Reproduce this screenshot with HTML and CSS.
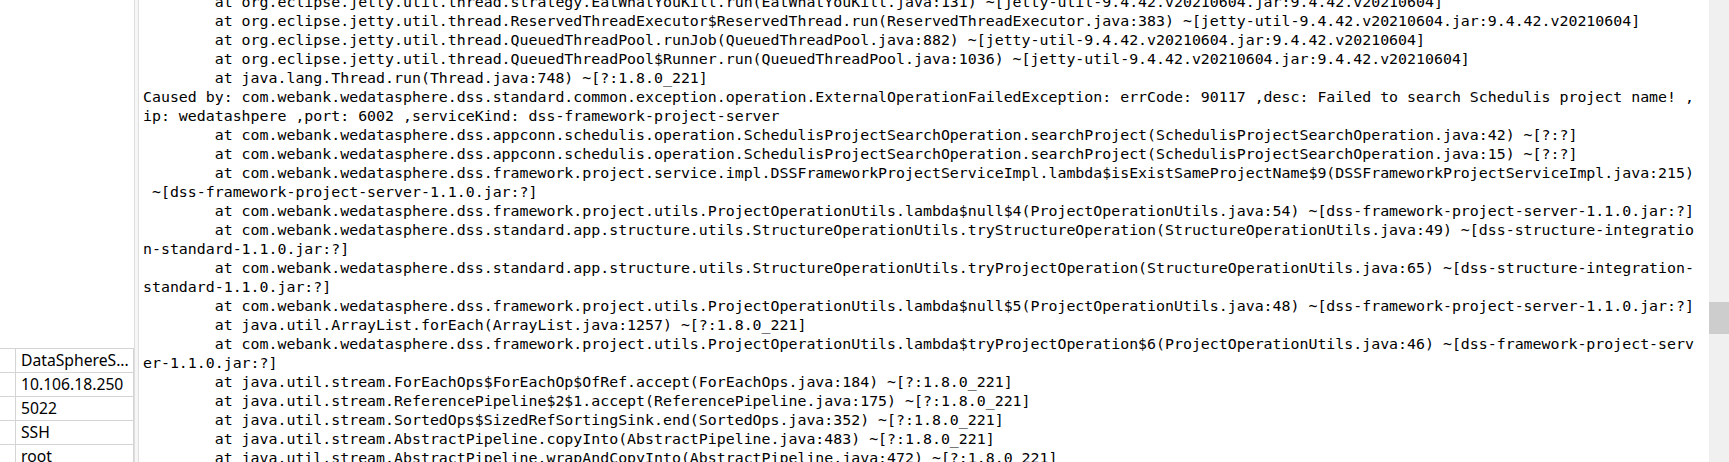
FILE: index.html
```html
<!DOCTYPE html>
<html>
<head>
<meta charset="utf-8">
<link rel="stylesheet" href="styles.css">
</head>
<body>
<div class="app">
  <div class="side">
    <div class="tree"></div>
    <table class="props">
      <tr><td class="gut"></td><td>DataSphereS...</td></tr>
      <tr><td class="gut"></td><td>10.106.18.250</td></tr>
      <tr><td class="gut"></td><td>5022</td></tr>
      <tr><td class="gut"></td><td>SSH</td></tr>
      <tr><td class="gut"></td><td>root</td></tr>
    </table>
  </div>
  <div class="splitter"></div>
  <div class="log">
<pre class="log-text">        at org.eclipse.jetty.util.thread.strategy.EatWhatYouKill.run(EatWhatYouKill.java:131) ~[jetty-util-9.4.42.v20210604.jar:9.4.42.v20210604]
        at org.eclipse.jetty.util.thread.ReservedThreadExecutor$ReservedThread.run(ReservedThreadExecutor.java:383) ~[jetty-util-9.4.42.v20210604.jar:9.4.42.v20210604]
        at org.eclipse.jetty.util.thread.QueuedThreadPool.runJob(QueuedThreadPool.java:882) ~[jetty-util-9.4.42.v20210604.jar:9.4.42.v20210604]
        at org.eclipse.jetty.util.thread.QueuedThreadPool$Runner.run(QueuedThreadPool.java:1036) ~[jetty-util-9.4.42.v20210604.jar:9.4.42.v20210604]
        at java.lang.Thread.run(Thread.java:748) ~[?:1.8.0_221]
Caused by: com.webank.wedatasphere.dss.standard.common.exception.operation.ExternalOperationFailedException: errCode: 90117 ,desc: Failed to search Schedulis project name! ,
ip: wedatashpere ,port: 6002 ,serviceKind: dss-framework-project-server
        at com.webank.wedatasphere.dss.appconn.schedulis.operation.SchedulisProjectSearchOperation.searchProject(SchedulisProjectSearchOperation.java:42) ~[?:?]
        at com.webank.wedatasphere.dss.appconn.schedulis.operation.SchedulisProjectSearchOperation.searchProject(SchedulisProjectSearchOperation.java:15) ~[?:?]
        at com.webank.wedatasphere.dss.framework.project.service.impl.DSSFrameworkProjectServiceImpl.lambda$isExistSameProjectName$9(DSSFrameworkProjectServiceImpl.java:215)
 ~[dss-framework-project-server-1.1.0.jar:?]
        at com.webank.wedatasphere.dss.framework.project.utils.ProjectOperationUtils.lambda$null$4(ProjectOperationUtils.java:54) ~[dss-framework-project-server-1.1.0.jar:?]
        at com.webank.wedatasphere.dss.standard.app.structure.utils.StructureOperationUtils.tryStructureOperation(StructureOperationUtils.java:49) ~[dss-structure-integratio
n-standard-1.1.0.jar:?]
        at com.webank.wedatasphere.dss.standard.app.structure.utils.StructureOperationUtils.tryProjectOperation(StructureOperationUtils.java:65) ~[dss-structure-integration-
standard-1.1.0.jar:?]
        at com.webank.wedatasphere.dss.framework.project.utils.ProjectOperationUtils.lambda$null$5(ProjectOperationUtils.java:48) ~[dss-framework-project-server-1.1.0.jar:?]
        at java.util.ArrayList.forEach(ArrayList.java:1257) ~[?:1.8.0_221]
        at com.webank.wedatasphere.dss.framework.project.utils.ProjectOperationUtils.lambda$tryProjectOperation$6(ProjectOperationUtils.java:46) ~[dss-framework-project-serv
er-1.1.0.jar:?]
        at java.util.stream.ForEachOps$ForEachOp$OfRef.accept(ForEachOps.java:184) ~[?:1.8.0_221]
        at java.util.stream.ReferencePipeline$2$1.accept(ReferencePipeline.java:175) ~[?:1.8.0_221]
        at java.util.stream.SortedOps$SizedRefSortingSink.end(SortedOps.java:352) ~[?:1.8.0_221]
        at java.util.stream.AbstractPipeline.copyInto(AbstractPipeline.java:483) ~[?:1.8.0_221]
        at java.util.stream.AbstractPipeline.wrapAndCopyInto(AbstractPipeline.java:472) ~[?:1.8.0_221]
</pre>
  </div>
  <div class="scroll">
    <div class="thumb"></div>
  </div>
</div>
</body>
</html>
```

FILE: styles.css
```css
html, body {
  margin: 0;
  padding: 0;
  background: #ffffff;
}

.app {
  display: flex;
  width: 1729px;
  height: 462px;
  overflow: hidden;
  background: #ffffff;
}

.side {
  width: 134px;
  flex: none;
  display: flex;
  flex-direction: column;
}

.tree {
  height: 348px;
  flex: none;
}

.props {
  width: 134px;
  border-collapse: collapse;
  table-layout: fixed;
  font-family: "Noto Sans", "Noto Sans CJK SC", sans-serif;
  font-size: 15.7px;
  color: #000;
}

.props tr {
  height: 24px;
}

.props td {
  border: 1px solid #d4d4d4;
  padding: 0 0 0 5px;
  white-space: nowrap;
  overflow: hidden;
  line-height: 23px;
}

.props td.gut {
  width: 15px;
  padding: 0;
  border-left: none;
}

.splitter {
  width: 3px;
  flex: none;
  border-left: 1px solid #dedede;
  border-right: 1px solid #dedede;
  background: #f6f6f6;
}

.log {
  flex: 1;
  min-width: 0;
  overflow: hidden;
  padding-left: 4px;
}

.log-text {
  margin: -7px 0 0;
  font-family: "DejaVu Sans Mono", monospace;
  font-size: 14.9px;
  line-height: 19px;
  color: #000;
  white-space: pre;
}

.scroll {
  width: 20px;
  flex: none;
  background: #f0f0f0;
  display: flex;
  flex-direction: column;
}

.thumb {
  margin-top: 302px;
  height: 32px;
  background: #cdcdcd;
}
```
